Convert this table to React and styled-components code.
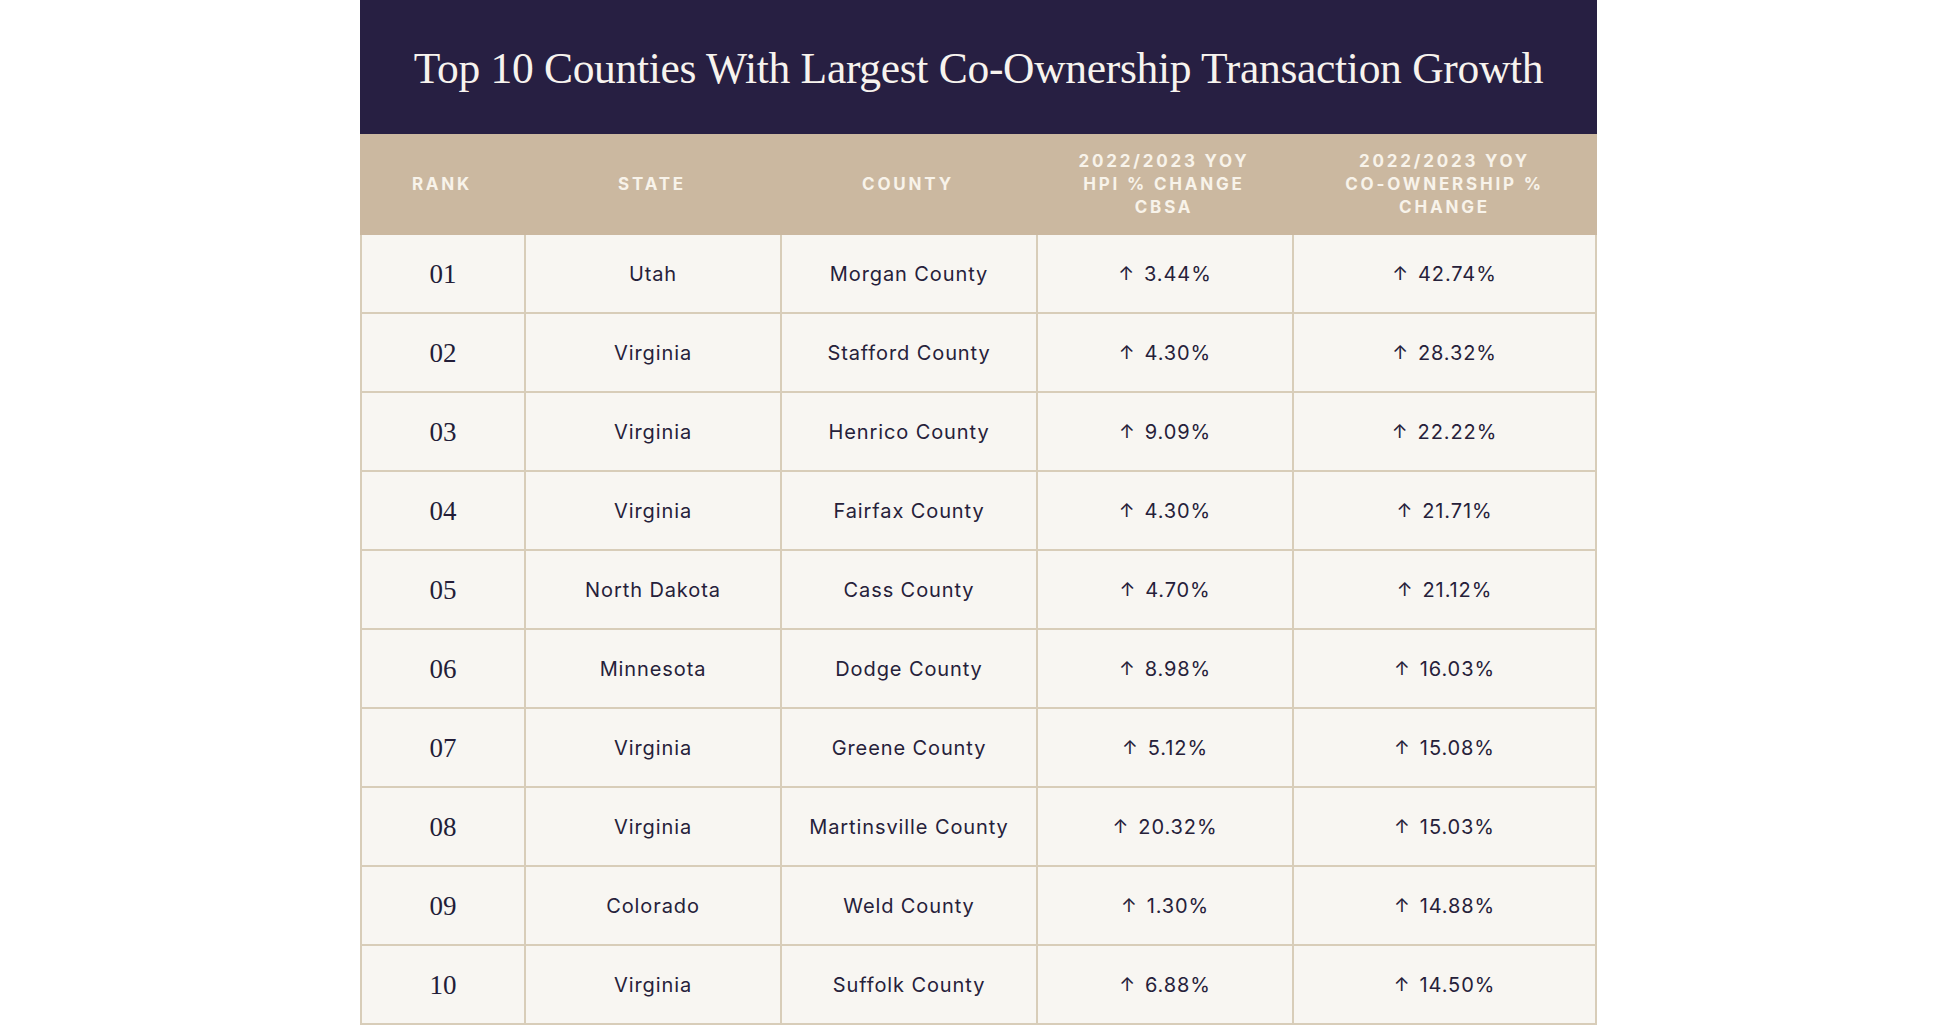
import React from "react";
import styled, { createGlobalStyle } from "styled-components";

const rows = [
  ["01", "Utah", "Morgan County", "3.44%", "42.74%"],
  ["02", "Virginia", "Stafford County", "4.30%", "28.32%"],
  ["03", "Virginia", "Henrico County", "9.09%", "22.22%"],
  ["04", "Virginia", "Fairfax County", "4.30%", "21.71%"],
  ["05", "North Dakota", "Cass County", "4.70%", "21.12%"],
  ["06", "Minnesota", "Dodge County", "8.98%", "16.03%"],
  ["07", "Virginia", "Greene County", "5.12%", "15.08%"],
  ["08", "Virginia", "Martinsville County", "20.32%", "15.03%"],
  ["09", "Colorado", "Weld County", "1.30%", "14.88%"],
  ["10", "Virginia", "Suffolk County", "6.88%", "14.50%"],
];

const GlobalStyle = createGlobalStyle`
  html, body {
    margin: 0;
    padding: 0;
    background: #ffffff;
  }
`;

function App() {
  return (
    <Page>
      <GlobalStyle />
      <Card>
        <TitleBar>
          <Title>Top 10 Counties With Largest Co-Ownership Transaction Growth</Title>
        </TitleBar>
        <Grid>
          <HeadCell>Rank</HeadCell>
          <HeadCell>State</HeadCell>
          <HeadCell>County</HeadCell>
          <HeadCell>
            2022/2023 YOY
            <br />
            HPI % Change
            <br />
            CBSA
          </HeadCell>
          <HeadCell>
            2022/2023 YOY
            <br />
            Co-Ownership %
            <br />
            Change
          </HeadCell>
          {rows.map((r) => (
            <React.Fragment key={r[0]}>
              <RankCell>{r[0]}</RankCell>
              <Cell>{r[1]}</Cell>
              <Cell>{r[2]}</Cell>
              <Cell>
                <Arrow>↑</Arrow>
                {r[3]}
              </Cell>
              <Cell $last>
                <Arrow>↑</Arrow>
                {r[4]}
              </Cell>
            </React.Fragment>
          ))}
        </Grid>
      </Card>
    </Page>
  );
}

export default App;

const Page = styled.div`
  width: 100%;
  height: 1025px;
  overflow: hidden;
  display: flex;
  justify-content: center;
`;

const Card = styled.div`
  width: 1237px;
  display: flex;
  flex-direction: column;
`;

const TitleBar = styled.div`
  height: 134px;
  background: #271f42;
  display: flex;
  align-items: center;
  justify-content: center;
`;

const Title = styled.h1`
  margin: 0;
  font-family: "Liberation Serif", "DejaVu Serif", serif;
  font-weight: 400;
  font-size: 43.5px;
  letter-spacing: -0.3px;
  color: #f7f3ee;
  padding-top: 2px;
`;

const Grid = styled.div`
  display: grid;
  grid-template-columns: 164px 256px 256px 256px 305px;
  grid-auto-rows: 79px;
  grid-template-rows: 101px;
  background: #f8f6f2;
`;

const HeadCell = styled.div`
  background: #cbb8a0;
  display: flex;
  align-items: center;
  justify-content: center;
  text-align: center;
  font-family: Inter, "Liberation Sans", sans-serif;
  font-weight: 700;
  font-size: 17px;
  line-height: 23px;
  letter-spacing: 2.8px;
  text-transform: uppercase;
  color: #f8f3ea;
`;

const Cell = styled.div`
  display: flex;
  align-items: center;
  justify-content: center;
  border-left: 2px solid #d8cdb9;
  border-right: ${(p) => (p.$last ? "2px solid #d8cdb9" : "none")};
  border-bottom: 2px solid #d8cdb9;
  font-family: Inter, "Liberation Sans", sans-serif;
  font-size: 20px;
  letter-spacing: 0.9px;
  color: #26213a;
`;

const RankCell = styled(Cell)`
  font-family: "Liberation Serif", "DejaVu Serif", serif;
  font-size: 27px;
  letter-spacing: 0;
  color: #231d38;
  padding-top: 2px;
`;

const Arrow = styled.span`
  margin-right: 9px;
  font-size: 19px;
`;
